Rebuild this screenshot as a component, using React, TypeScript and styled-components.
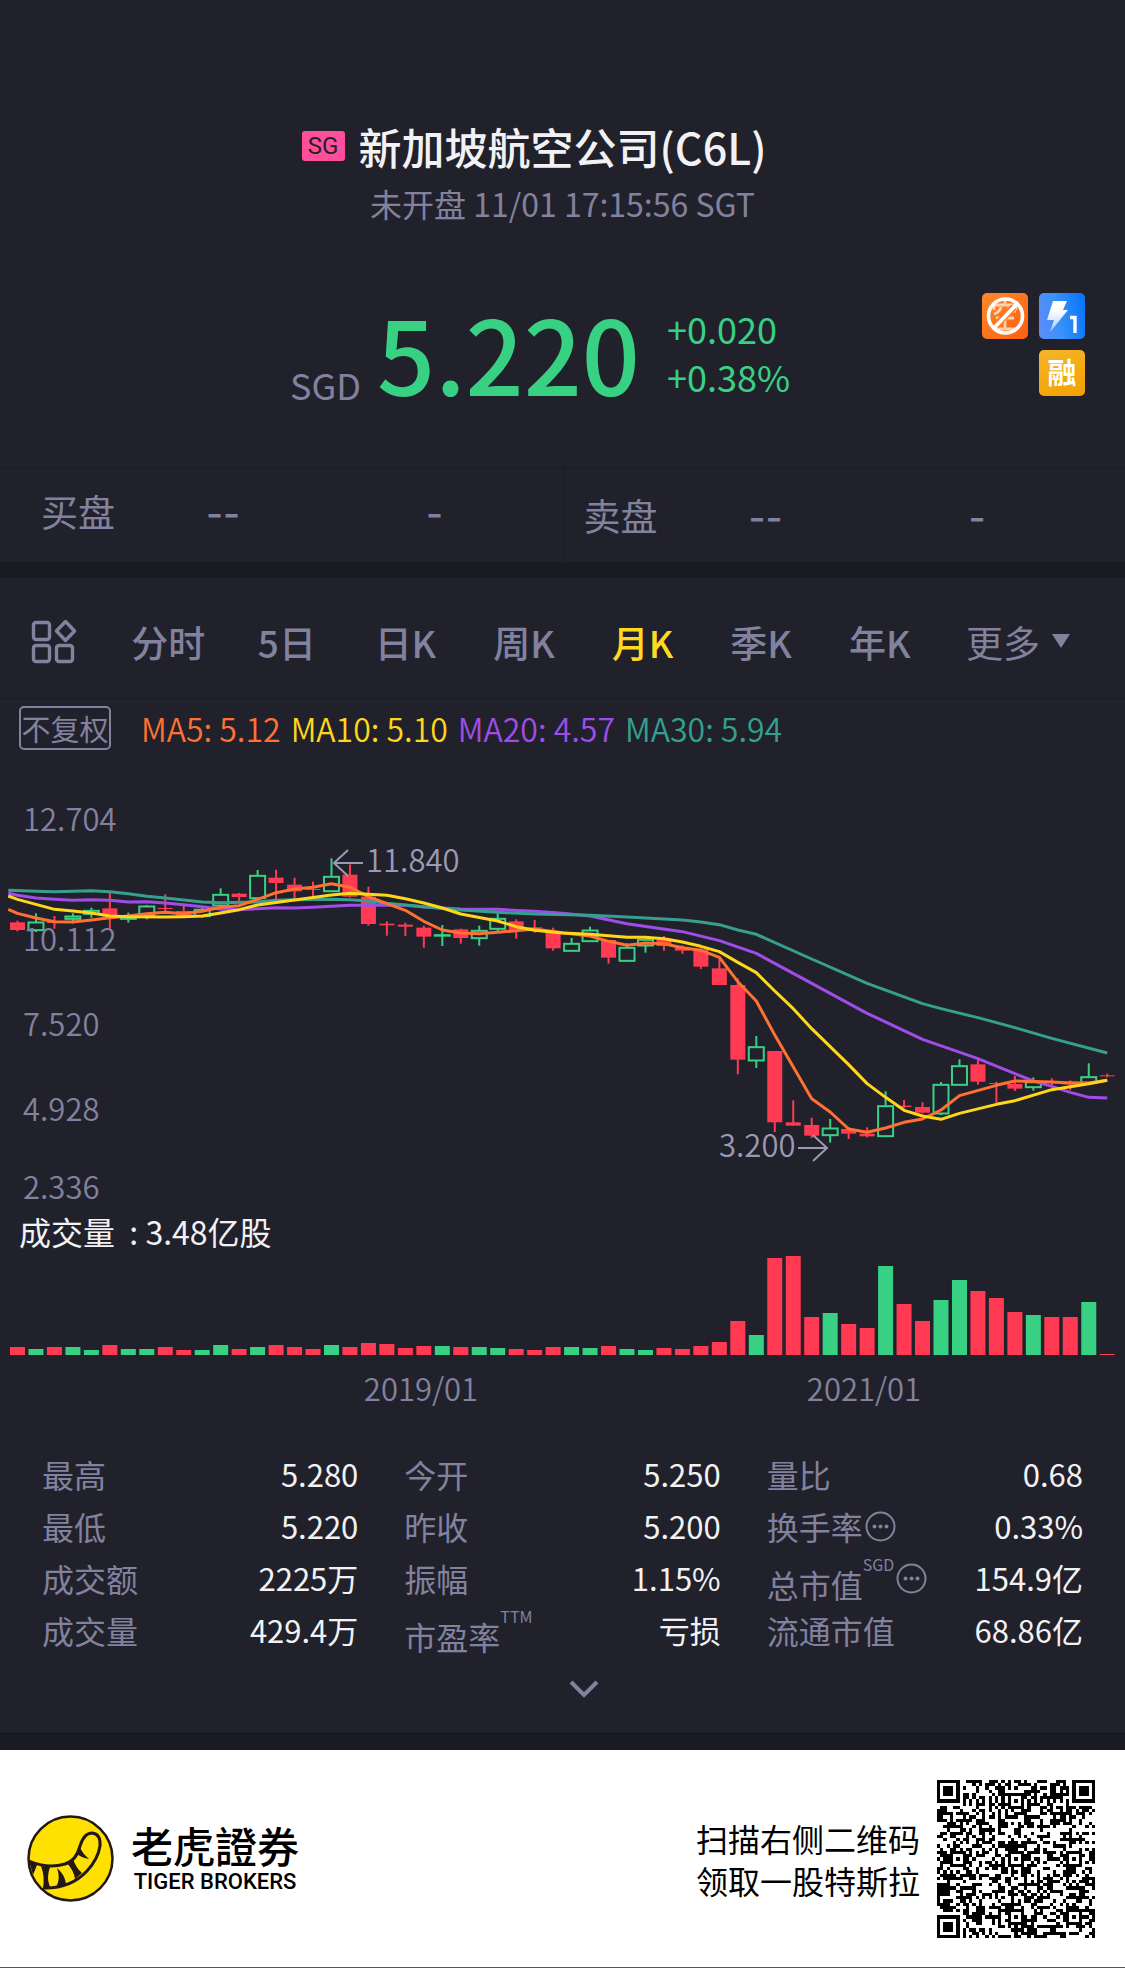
import React from "react";
import styled, { createGlobalStyle, css } from "styled-components";

const color = {
  bg: "#21212b",
  band: "#1a1a23",
  line: "#1a1a22",
  muted: "#82829f",
  note: "#9a9ab4",
  white: "#f2f2f4",
  up: "#38d184",
  down: "#ff3a52",
  active: "#ffd91e",
  ma5: "#ff7033",
  ma10: "#ffd61a",
  ma20: "#a04de8",
  ma30: "#35a08f",
};

const font = `"Noto Sans CJK SC", "Noto Sans", sans-serif`;

const GlobalStyle = createGlobalStyle`
  *, *::before, *::after { box-sizing: border-box; }
  body { margin: 0; background: ${color.bg}; }
  h1, p, dl, dt, dd { margin: 0; font-weight: inherit; }
  button, select {
    appearance: none;
    border: 0;
    padding: 0;
    margin: 0;
    background: none;
    color: inherit;
    font: inherit;
    cursor: pointer;
  }
  svg { display: block; }
`;

const Page = styled.main`
  color: ${color.muted};
  font-family: ${font};
  font-size: 32px;
  line-height: 40px;
  background: ${color.bg};
`;

/* Header */

const Header = styled.header`
  padding: 116px 0 55px;
  border-bottom: 1px solid ${color.line};
`;

const TitleRow = styled.div`
  display: grid;
  grid-template-columns: 1fr auto 1fr;
  align-items: center;
  column-gap: 14px;
`;

const Market = styled.span`
  justify-self: end;
  width: 43px;
  border-radius: 3px;
  background: #ff4f9a;
  color: ${color.bg};
  font-family: Roboto, sans-serif;
  font-size: 24px;
  line-height: 30px;
  text-align: center;
`;

const Title = styled.h1`
  color: ${color.white};
  font-size: 43px;
  font-weight: 500;
  line-height: 60px;
`;

const Status = styled.p`
  margin-top: 7px;
  text-align: center;
`;

const PriceRow = styled.div`
  display: flex;
  align-items: flex-start;
  justify-content: space-between;
  margin-top: 69px;
  padding: 0 40px 0 290px;
`;

const PriceGroup = styled.div`
  display: flex;
  align-items: center;
  font-size: 36px;
`;

const Currency = styled.span`
  align-self: flex-end;
  line-height: 56px;
`;

const Price = styled.strong`
  margin: 0 27px 0 16px;
  color: ${color.up};
  font-size: 102px;
  font-weight: 500;
  line-height: 120px;
`;

const Change = styled.div`
  display: flex;
  flex-direction: column;
  color: ${color.up};
  line-height: 48px;
`;

const Badges = styled.div`
  display: grid;
  grid-template-columns: 46px 46px;
  gap: 11px;
  margin-top: 1px;
  & > :last-child {
    grid-column: 2;
  }
`;

/* Bid and ask */

const Depth = styled.section`
  display: grid;
  grid-template-columns: 1fr 1fr;
  border-bottom: 16px solid ${color.band};
`;

const Side = styled.div<{ $ask?: boolean }>`
  display: grid;
  grid-template-columns: 165px 220px 1fr;
  align-items: center;
  height: 94px;
  font-size: 37px;
  padding: ${(p) => (p.$ask ? "0 0 0 20px" : "0 0 8px 41px")};
  ${(p) => p.$ask && css`border-left: 1px solid ${color.line};`}
`;

const Dash = styled.span`
  padding-top: 6px;
  font-family: Inter, sans-serif;
  font-weight: 500;
`;

/* Period tabs */

const Tabs = styled.nav`
  display: grid;
  grid-template-columns: 109px repeat(7, 1fr) 186px;
  align-items: center;
  height: 121px;
  padding-top: 7px;
  border-bottom: 1px solid ${color.line};
  font-size: 37px;
  line-height: 48px;
`;

const Tab = styled.button<{ $active?: boolean }>`
  font-weight: 500;
  color: ${(p) => (p.$active ? color.active : color.muted)};
`;

const LayoutButton = styled.button`
  padding-left: 31px;
`;

const More = styled.label`
  display: flex;
  align-items: center;
  gap: 11px;
  padding-left: 27px;
`;

/* Chart */

const Legend = styled.div`
  display: flex;
  align-items: center;
  gap: 10px;
  padding: 7px 19px;
`;

const Adjust = styled.button`
  width: 92px;
  height: 44px;
  margin-right: 20px;
  border: 2px solid ${color.muted};
  border-radius: 5px;
  font-size: 29px;
  line-height: 36px;
  white-space: nowrap;
`;

const Average = styled.span<{ $tone: string }>`
  color: ${(p) => p.$tone};
  font-weight: 350;
`;

const Chart = styled.svg`
  width: 100%;
  height: auto;
  font-family: ${font};
  font-size: 31px;
  font-weight: 350;
`;

const VolumeCaption = styled.p`
  padding: 6px 19px 0;
  color: ${color.white};
  line-height: 44px;
  white-space: pre;
`;

/* Statistics */

const Stats = styled.dl`
  display: grid;
  grid-template-columns: repeat(3, 1fr);
  column-gap: 46px;
  padding: 28px 42px 0;
`;

const Stat = styled.div`
  display: flex;
  justify-content: space-between;
  height: 52px;
  line-height: 52px;
`;

const StatName = styled.dt`
  display: flex;
  align-items: center;
`;

const StatText = styled.span<{ $low?: boolean }>`
  padding-top: ${(p) => (p.$low ? "12px" : "0")};
`;

const Sup = styled.sup`
  align-self: flex-start;
  font-size: 16px;
  line-height: 24px;
`;

const StatValue = styled.dd`
  color: ${color.white};
  font-size: 31px;
`;

const InfoButton = styled.button`
  margin-left: 2px;
`;

const Expand = styled.div`
  display: flex;
  justify-content: center;
  padding: 0 0 11px 42px;
  border-bottom: 1px solid #101018;
`;

const ExpandButton = styled.button`
  display: grid;
  place-items: center;
  width: 66px;
  height: 66px;
`;

/* Footer */

const Footer = styled.footer`
  display: flex;
  align-items: center;
  justify-content: space-between;
  height: 234px;
  padding: 0 30px 0 27px;
  border-top: 16px solid ${color.band};
  border-bottom: 1px solid #55555c;
  background: #fff;
  color: #000;
`;

const Brand = styled.div`
  display: flex;
  align-items: center;
  gap: 17px;
`;

const BrandNames = styled.div`
  display: flex;
  flex-direction: column;
  align-items: center;
`;

const BrandChinese = styled.span`
  font-family: "Noto Sans CJK TC", sans-serif;
  font-size: 42px;
  font-weight: 500;
  line-height: 46px;
`;

const BrandEnglish = styled.span`
  font-family: Roboto, sans-serif;
  font-size: 22px;
  font-weight: 500;
  line-height: 28px;
`;

const Invite = styled.div`
  display: flex;
  align-items: center;
  gap: 17px;
  line-height: 42px;
`;

/* ---- chart data ---- */

type Candle = [up: 0 | 1, high: number, top: number, bottom: number, low: number, volume: number];

// Prices are stored as depth below the top of the plot, three units to a pixel.
const candles: Candle[] = [
  [0, 452, 457, 480, 484, 8], [1, 430, 456, 482, 486, 6], [0, 438, 456, 459, 476, 8],
  [1, 430, 438, 448, 460, 8], [1, 413, 421, 433, 443, 5], [0, 369, 415, 435, 478, 10],
  [1, 428, 443, 448, 458, 6], [1, 405, 408, 437, 448, 6], [0, 373, 414, 417, 425, 8],
  [0, 408, 423, 437, 438, 5], [1, 412, 418, 440, 443, 5], [1, 355, 373, 408, 408, 10],
  [0, 369, 371, 381, 396, 6], [1, 300, 316, 386, 386, 8], [0, 299, 323, 339, 388, 10],
  [0, 323, 344, 364, 387, 8], [0, 335, 357, 360, 380, 6], [1, 265, 319, 365, 365, 10],
  [0, 283, 314, 380, 382, 8], [0, 350, 380, 462, 467, 12], [0, 454, 461, 466, 497, 11],
  [0, 458, 464, 470, 498, 7], [0, 467, 473, 500, 533, 9], [1, 465, 494, 498, 528, 9],
  [0, 476, 478, 504, 521, 8], [1, 467, 481, 506, 527, 8], [1, 427, 445, 478, 484, 7],
  [0, 448, 454, 481, 506, 6], [0, 450, 472, 475, 488, 5], [0, 473, 483, 535, 542, 8],
  [1, 504, 520, 544, 544, 8], [1, 470, 480, 515, 515, 7], [0, 510, 510, 563, 581, 9],
  [1, 520, 532, 574, 576, 6], [1, 502, 508, 528, 548, 5], [0, 498, 508, 528, 542, 7],
  [0, 526, 532, 542, 551, 6], [0, 535, 538, 590, 597, 9], [0, 568, 595, 645, 645, 13],
  [0, 625, 645, 869, 913, 34], [1, 798, 830, 873, 894, 20], [0, 843, 843, 1057, 1086, 97],
  [0, 991, 1057, 1067, 1067, 99], [0, 1043, 1065, 1097, 1104, 38], [1, 1047, 1074, 1097, 1118, 42],
  [0, 1072, 1077, 1091, 1107, 31], [0, 1072, 1091, 1099, 1102, 27], [1, 964, 1007, 1100, 1100, 89],
  [0, 990, 1007, 1011, 1014, 51], [0, 997, 1011, 1028, 1030, 34], [1, 936, 943, 1032, 1035, 55],
  [1, 868, 887, 946, 946, 75], [0, 870, 883, 935, 944, 64], [0, 935, 939, 942, 998, 57],
  [0, 918, 942, 956, 963, 43], [1, 922, 935, 953, 962, 40], [0, 925, 934, 938, 945, 38],
  [0, 931, 935, 943, 960, 38], [1, 880, 920, 940, 942, 53], [0, 911, 916, 919, 922, 1],
];

const averages: { name: string; value: string; tone: string; points: [number, number][] }[] = [
  {
    name: "MA20", value: "4.57", tone: color.ma20,
    points: [[-0.5, 370], [0, 376], [1, 384], [2, 388], [3, 391], [4, 389], [5, 391], [6, 396], [7, 395],
      [8, 399], [9, 404], [10, 410], [11, 418], [12, 419], [13, 416], [14, 413], [15, 414], [16, 412],
      [18, 406], [21, 406], [22, 411], [24, 417], [26, 418], [28, 424], [29.5, 430], [31, 438], [33, 461],
      [36, 485], [38, 512], [40, 550], [43, 640], [46, 730], [49, 808], [52, 866], [54, 911], [55, 933],
      [56, 949], [57, 967], [58, 982], [59, 984]],
  },
  {
    name: "MA30", value: "5.94", tone: color.ma30,
    points: [[-0.5, 361], [1, 364], [2, 365], [4, 362], [5, 365], [6, 371], [7, 379], [8, 384], [9, 390],
      [10, 396], [11, 398], [13, 396], [14, 391], [15, 389], [17, 388], [18, 389], [19, 393], [20, 400],
      [22, 410], [24, 420], [26, 427], [28, 432], [31, 436], [33, 441], [36, 450], [37, 456], [38, 464],
      [39, 480], [40, 493], [43, 567], [46, 640], [49, 701], [50, 716], [52, 743], [54, 773], [56, 805], [59, 849]],
  },
  {
    name: "MA5", value: "5.12", tone: color.ma5,
    points: [[-0.5, 418], [0, 430], [1, 444], [2, 455], [3, 456], [4, 450], [5, 443], [6, 438], [7, 431],
      [8, 427], [9, 431], [10, 424], [11, 412], [12, 407], [13, 388], [14, 368], [15, 357], [16, 352],
      [17, 341], [18, 352], [19, 380], [20, 401], [21, 421], [22, 454], [23, 480], [24, 489], [25, 491],
      [26, 487], [27, 482], [28, 477], [29.5, 488], [31, 498], [32, 514], [33, 526], [34, 519], [35, 521],
      [36, 533], [37, 541], [38, 562], [39, 635], [40, 693], [41, 795], [43, 986], [44, 1026], [45, 1077],
      [46, 1087], [47, 1074], [48, 1057], [49, 1047], [50, 1020], [51, 977], [53, 946], [54, 933],
      [56, 936], [57, 939], [58, 939], [59, 931]],
  },
  {
    name: "MA10", value: "5.10", tone: color.ma10,
    points: [[-0.5, 378], [0, 388], [2, 418], [3, 423], [4, 429], [5, 438], [6, 440], [8, 441], [9, 440],
      [10, 438], [11, 429], [12, 419], [13, 405], [15, 390], [17, 375], [18, 370], [20, 376], [21, 386],
      [22, 399], [23, 414], [24, 432], [26, 453], [27, 470], [28, 481], [29.5, 489], [31, 493], [33, 502],
      [34, 502], [35, 506], [36, 516], [37, 529], [38, 545], [39, 577], [40, 608], [41, 663], [42, 716],
      [43, 776], [45, 884], [46, 941], [47, 982], [48, 1021], [49, 1038], [50, 1048], [51, 1030],
      [53, 1003], [54, 992], [56, 959], [57, 950], [58, 941], [59, 931]],
  },
];

const legend = ["MA5", "MA10", "MA20", "MA30"].map((n) => averages.find((a) => a.name === n)!);

const PITCH = 18.47;
const xAt = (i: number) => 17.5 + i * PITCH;
const yAt = (v: number) => 13 + v / 3;

function CandleChart() {
  return (
    <Chart viewBox="0 0 1125 446" role="img" aria-label="月K线图">
      {candles.map(([up, high, top, bottom, low], i) => {
        const tone = up ? color.up : color.down;
        const x = xAt(i);
        const y1 = yAt(top);
        const y2 = yAt(bottom);
        return (
          <g key={i} stroke={tone} strokeWidth={2}>
            <line x1={x} x2={x} y1={yAt(high)} y2={up ? y1 : yAt(low)} />
            {up ? (
              <>
                <line x1={x} x2={x} y1={y2} y2={yAt(low)} />
                <rect x={x - 7.5} y={y1 + 0.5} width={15} height={Math.max(y2 - y1 - 1, 0.5)} fill="none" />
              </>
            ) : (
              <rect x={x - 7.5} y={y1} width={15} height={Math.max(y2 - y1, 1)} fill={tone} stroke="none" />
            )}
          </g>
        );
      })}
      <g fill={color.muted}>
        <text x="23" y="74">12.704</text>
        <text x="23" y="194">10.112</text>
        <text x="23" y="279">7.520</text>
        <text x="23" y="364">4.928</text>
        <text x="23" y="442">2.336</text>
      </g>
      {averages.map((a) => (
        <polyline
          key={a.name}
          points={a.points.map(([i, v]) => `${xAt(i)},${yAt(v)}`).join(" ")}
          fill="none"
          stroke={a.tone}
          strokeWidth={3}
          strokeLinejoin="round"
        />
      ))}
      <g fill="none" stroke={color.note} strokeWidth={2}>
        <path d="M363 106H334M348 93L334 106L348 119" />
        <path d="M798 391H827M813 378L827 391L813 404" />
      </g>
      <g fill={color.note}>
        <text x="366" y="115">11.840</text>
        <text x="719" y="400">3.200</text>
      </g>
    </Chart>
  );
}

function VolumeChart() {
  return (
    <Chart viewBox="0 0 1125 167" role="img" aria-label="成交量">
      {candles.map(([up, , , , , volume], i) => (
        <rect
          key={i}
          x={xAt(i) - 7.5}
          y={102 - volume}
          width={15}
          height={volume}
          fill={up ? color.up : color.down}
        />
      ))}
      <g fill={color.muted} textAnchor="middle">
        <text x="421" y="148">2019/01</text>
        <text x="864" y="148">2021/01</text>
      </g>
    </Chart>
  );
}

/* ---- icons ---- */

function NoShortBadge() {
  return (
    <svg width="46" height="46" viewBox="0 0 46 46" role="img" aria-label="不可卖空">
      <defs>
        <linearGradient id="orange" x1="0" y1="0" x2="1" y2="1">
          <stop offset="0" stopColor="#f98a2c" />
          <stop offset="1" stopColor="#ff5e10" />
        </linearGradient>
      </defs>
      <rect width="46" height="46" rx="5" fill="url(#orange)" />
      <g stroke="#ffd2b0" strokeWidth="2.8" fill="none">
        <path d="M23 7V12M12 17V12H34V17M19 14Q18 19 12 21M27 14V18H34M14 25H32M23 25V36M12 36H34" />
      </g>
      <path d="M14 32L32 14" stroke="#ff7a26" strokeWidth="7" />
      <circle cx="23.500" cy="23" r="17" fill="none" stroke="#fff" strokeWidth="3.6" />
      <path d="M12 35L35 11" stroke="#fff" strokeWidth="3.6" />
    </svg>
  );
}

function LevelOneBadge() {
  return (
    <svg width="46" height="46" viewBox="0 0 46 46" role="img" aria-label="L1 行情">
      <defs>
        <linearGradient id="blue" x1="0" y1="0.6" x2="1" y2="0.4">
          <stop offset="0" stopColor="#5b8df5" />
          <stop offset="0.400" stopColor="#3b92fb" />
          <stop offset="1" stopColor="#0a76fa" />
        </linearGradient>
        <linearGradient id="bolt" x1="0" y1="0" x2="0" y2="1">
          <stop offset="0.300" stopColor="#fff" />
          <stop offset="1" stopColor="#a9ccff" />
        </linearGradient>
      </defs>
      <rect width="46" height="46" rx="5" fill="url(#blue)" />
      <path d="M14 8H28L24 17H29L11 39L15 27H8Z" fill="url(#bolt)" />
      <path d="M31 24.500H36V40" fill="none" stroke="#fff" strokeWidth="3.400" />
    </svg>
  );
}

const Margin = styled.span`
  display: block;
  height: 46px;
  border-radius: 5px;
  background: linear-gradient(160deg, #f5b52c, #f3a000);
  color: #fff;
  font-size: 29px;
  font-weight: 700;
  line-height: 42px;
  text-align: center;
`;

function LayoutIcon() {
  return (
    <svg width="46" height="44" viewBox="0 0 46 44" fill="none" stroke={color.muted} strokeWidth="3.400" strokeLinejoin="round">
      <rect x="2.500" y="2.500" width="16" height="17" rx="2.500" />
      <rect x="2.500" y="25.500" width="16" height="16" rx="2.500" />
      <rect x="25.500" y="25.500" width="16" height="16" rx="2.500" />
      <path d="M34.500 1.500L43.500 11L34.500 20.500L25.500 11Z" />
    </svg>
  );
}

function InfoIcon() {
  return (
    <svg width="31" height="31" viewBox="0 0 31 31">
      <circle cx="15.500" cy="15.500" r="14" fill="none" stroke={color.muted} strokeWidth="2" />
      <g fill={color.muted}>
        <circle cx="9.500" cy="15.500" r="2" />
        <circle cx="15.500" cy="15.500" r="2" />
        <circle cx="21.500" cy="15.500" r="2" />
      </g>
    </svg>
  );
}

function TigerLogo() {
  return (
    <svg width="87" height="87" viewBox="0 0 87 87" role="img" aria-label="老虎證券">
      <circle cx="43.500" cy="43.500" r="42" fill="#ffe100" stroke="#231815" strokeWidth="2.500" />
      <path
        d="M2 46Q20 54 38 49Q49 46 53 31Q57 18 65 18Q74 19 73 31Q71 44 60 56Q43 74 16 73"
        fill="none" stroke="#231815" strokeWidth="3"
      />
      <path
        d="M2 46L10 50L6 60ZM14 51L23 52Q19 63 23 72L16 73Q18 62 14 51ZM30 53Q38 60 39 69L29 72Q34 64 30 53ZM40 48L46 44Q49 53 55 58L48 64Q47 56 40 48ZM50 39L53 33Q56 39 62 44Q55 43 50 39Z"
        fill="#231815"
      />
    </svg>
  );
}

/* ---- QR code ---- */

const QR_SIZE = 49;

function buildQr(): string {
  const anchors = [6, 24, 42];
  const far = QR_SIZE - 7;
  let seed = 20211;
  const random = () => {
    seed = (seed * 1103515245 + 12345) % 2147483648;
    return seed / 2147483648;
  };
  const finder = (x: number, y: number): boolean | null => {
    for (const [ox, oy] of [[0, 0], [far, 0], [0, far]]) {
      const d = Math.max(Math.abs(x - ox - 3), Math.abs(y - oy - 3));
      if (d <= 4) return d !== 2 && d !== 4;
    }
    return null;
  };
  const alignment = (x: number, y: number): boolean | null => {
    for (const ax of anchors)
      for (const ay of anchors) {
        if (finder(ax, ay) !== null) continue;
        const d = Math.max(Math.abs(x - ax), Math.abs(y - ay));
        if (d <= 2) return d !== 1;
      }
    return null;
  };
  let path = "";
  for (let y = 0; y < QR_SIZE; y++)
    for (let x = 0; x < QR_SIZE; x++) {
      const noise = random() < 0.5;
      const timing = x === 6 ? y % 2 === 0 : y === 6 ? x % 2 === 0 : null;
      if (finder(x, y) ?? alignment(x, y) ?? timing ?? noise) path += `M${x} ${y}h1v1h-1z`;
    }
  return path;
}

const qrPath = buildQr();

/* ---- page ---- */

const periods = ["分时", "5日", "日K", "周K", "月K", "季K", "年K"];

const stats: { name: string; value: string; sup?: string; info?: boolean }[] = [
  { name: "最高", value: "5.280" },
  { name: "今开", value: "5.250" },
  { name: "量比", value: "0.68" },
  { name: "最低", value: "5.220" },
  { name: "昨收", value: "5.200" },
  { name: "换手率", value: "0.33%", info: true },
  { name: "成交额", value: "2225万" },
  { name: "振幅", value: "1.15%" },
  { name: "总市值", value: "154.9亿", sup: "SGD", info: true },
  { name: "成交量", value: "429.4万" },
  { name: "市盈率", value: "亏损", sup: "TTM" },
  { name: "流通市值", value: "68.86亿" },
];

export default function App() {
  return (
    <Page lang="zh-CN">
      <GlobalStyle />
      <Header>
        <TitleRow>
          <Market>SG</Market>
          <Title>新加坡航空公司(C6L)</Title>
        </TitleRow>
        <Status>未开盘 11/01 17:15:56 SGT</Status>
        <PriceRow>
          <PriceGroup>
            <Currency>SGD</Currency>
            <Price>5.220</Price>
            <Change>
              <span>+0.020</span>
              <span>+0.38%</span>
            </Change>
          </PriceGroup>
          <Badges>
            <NoShortBadge />
            <LevelOneBadge />
            <Margin>融</Margin>
          </Badges>
        </PriceRow>
      </Header>

      <Depth>
        <Side>
          <span>买盘</span>
          <Dash>--</Dash>
          <Dash>-</Dash>
        </Side>
        <Side $ask>
          <span>卖盘</span>
          <Dash>--</Dash>
          <Dash>-</Dash>
        </Side>
      </Depth>

      <Tabs>
        <LayoutButton aria-label="布局">
          <LayoutIcon />
        </LayoutButton>
        {periods.map((p) => (
          <Tab key={p} $active={p === "月K"}>{p}</Tab>
        ))}
        <More>
          <select aria-label="更多周期">
            <option>更多</option>
          </select>
          <svg width="20" height="15" viewBox="0 0 20 15">
            <path d="M1 0H19L10 14Z" fill={color.muted} />
          </svg>
        </More>
      </Tabs>

      <section>
        <Legend>
          <Adjust>不复权</Adjust>
          {legend.map((a) => (
            <Average key={a.name} $tone={a.tone}>{`${a.name}: ${a.value}`}</Average>
          ))}
        </Legend>
        <CandleChart />
        <VolumeCaption>{"成交量  : 3.48亿股"}</VolumeCaption>
        <VolumeChart />
      </section>

      <Stats>
        {stats.map((s) => (
          <Stat key={s.name}>
            <StatName>
              <StatText $low={!!s.sup}>{s.name}</StatText>
              {s.sup && <Sup>{s.sup}</Sup>}
              {s.info && (
                <InfoButton aria-label={`${s.name}说明`}>
                  <InfoIcon />
                </InfoButton>
              )}
            </StatName>
            <StatValue>{s.value}</StatValue>
          </Stat>
        ))}
      </Stats>
      <Expand>
        <ExpandButton aria-label="展开">
          <svg width="30" height="18" viewBox="0 0 30 18">
            <path d="M2 2L15 15L28 2" fill="none" stroke={color.muted} strokeWidth="4" />
          </svg>
        </ExpandButton>
      </Expand>

      <Footer>
        <Brand>
          <TigerLogo />
          <BrandNames>
            <BrandChinese lang="zh-Hant">老虎證券</BrandChinese>
            <BrandEnglish lang="en">TIGER BROKERS</BrandEnglish>
          </BrandNames>
        </Brand>
        <Invite>
          <p>
            扫描右侧二维码
            <br />
            领取一股特斯拉
          </p>
          <svg width="158" height="158" viewBox={`0 0 ${QR_SIZE} ${QR_SIZE}`} shapeRendering="crispEdges" role="img" aria-label="二维码">
            <path d={qrPath} />
          </svg>
        </Invite>
      </Footer>
    </Page>
  );
}
